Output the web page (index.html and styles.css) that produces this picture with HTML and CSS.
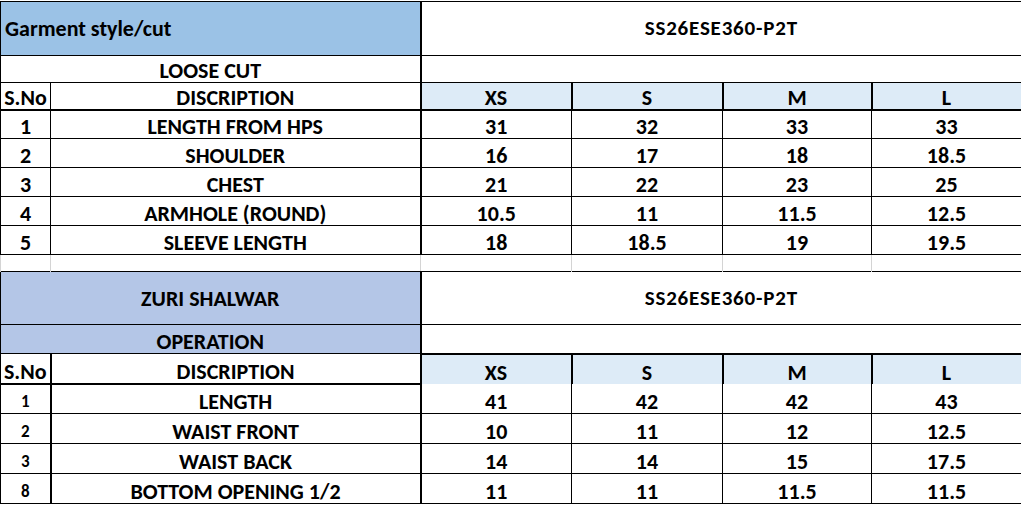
FILE: index.html
```html
<!DOCTYPE html>
<html>
<head>
<meta charset="utf-8">
<link rel="stylesheet" href="styles.css">
</head>
<body>
<table class="sheet">
  <colgroup>
    <col class="c-no"><col class="c-desc"><col class="c-xs"><col class="c-s"><col class="c-m"><col class="c-l">
  </colgroup>
  <tbody>
    <tr class="r-title">
      <td colspan="2" class="title edge">Garment style/cut</td>
      <td colspan="4" class="code">SS26ESE360-P2T</td>
    </tr>
    <tr class="r-27">
      <td colspan="2" class="edge">LOOSE CUT</td>
      <td colspan="4"></td>
    </tr>
    <tr class="r-27 head">
      <td>S.No</td><td class="edge">DISCRIPTION</td>
      <td class="sz">XS</td><td class="sz">S</td><td class="sz">M</td><td class="sz">L</td>
    </tr>
    <tr class="r-29"><td>1</td><td class="edge">LENGTH FROM HPS</td><td>31</td><td>32</td><td>33</td><td>33</td></tr>
    <tr class="r-29"><td>2</td><td class="edge">SHOULDER</td><td>16</td><td>17</td><td>18</td><td>18.5</td></tr>
    <tr class="r-29"><td>3</td><td class="edge">CHEST</td><td>21</td><td>22</td><td>23</td><td>25</td></tr>
    <tr class="r-29"><td>4</td><td class="edge">ARMHOLE (ROUND)</td><td>10.5</td><td>11</td><td>11.5</td><td>12.5</td></tr>
    <tr class="r-29"><td>5</td><td class="edge">SLEEVE LENGTH</td><td>18</td><td>18.5</td><td>19</td><td>19.5</td></tr>
    <tr class="r-gap"><td></td><td></td><td></td><td></td><td></td><td></td></tr>
    <tr class="r-title2">
      <td colspan="2" class="band edge">ZURI SHALWAR</td>
      <td colspan="4" class="code">SS26ESE360-P2T</td>
    </tr>
    <tr class="r-29">
      <td colspan="2" class="band edge">OPERATION</td>
      <td colspan="4"></td>
    </tr>
    <tr class="r-30 head2">
      <td class="no hd">S.No</td><td class="edge">DISCRIPTION</td>
      <td class="sz">XS</td><td class="sz">S</td><td class="sz">M</td><td class="sz">L</td>
    </tr>
    <tr class="r-30 first"><td class="no">1</td><td class="edge">LENGTH</td><td>41</td><td>42</td><td>42</td><td>43</td></tr>
    <tr class="r-30"><td class="no">2</td><td class="edge">WAIST FRONT</td><td>10</td><td>11</td><td>12</td><td>12.5</td></tr>
    <tr class="r-30"><td class="no">3</td><td class="edge">WAIST BACK</td><td>14</td><td>14</td><td>15</td><td>17.5</td></tr>
    <tr class="r-30"><td class="no">8</td><td class="edge">BOTTOM OPENING 1/2</td><td>11</td><td>11</td><td>11.5</td><td>11.5</td></tr>
  </tbody>
</table>
</body>
</html>
```

FILE: styles.css
```css
html, body {
  margin: 0;
  padding: 0;
  background: #ffffff;
}

body {
  padding-top: 1px;
  overflow: hidden;
}

.sheet {
  border-collapse: collapse;
  table-layout: fixed;
  width: 1021px;
  font-family: Carlito, "Liberation Sans Narrow", "Open Sans", sans-serif;
  font-weight: bold;
  font-size: 22px;
  color: #000;
}

.c-no { width: 50px; }
.c-desc { width: 370px; }
.c-xs { width: 151px; }
.c-s { width: 151px; }
.c-m { width: 149px; }
.c-l { width: 150px; }

.sheet td {
  border: 1px solid #000;
  padding: 0 2px 0;
  text-align: center;
  vertical-align: bottom;
  line-height: 23px;
  white-space: nowrap;
}

.sheet td.edge {
  border-right: 2px solid #000;
}

.r-title { height: 54px; }
.r-title2 { height: 53px; }
.r-27 { height: 27px; }
.r-29 { height: 29px; }
.r-30 { height: 30px; }
.r-gap { height: 17px; }

.sheet td.title {
  background: #9bc2e6;
  text-align: left;
  vertical-align: middle;
  padding-left: 4px;
}

.sheet td.code {
  vertical-align: middle;
  font-size: 21px;
  letter-spacing: 0.8px;
}

.sheet td.band {
  background: #b4c6e7;
}

.r-title2 .band {
  vertical-align: middle;
}

.head td {
  border-bottom: 2px solid #000;
}

.sheet td.sz {
  background: #ddebf7;
  border-left: 2px solid #000;
  border-right: 2px solid #000;
}

.head2 td.sz {
  border-top: 2px solid #000;
  border-bottom: none;
}

.head2 td.no,
.head2 td.edge {
  border-bottom: 2px solid #000;
}

.first td:nth-child(n+3) {
  border-top: none;
}

.sheet td.no {
  border-right: 2px solid #000;
  font-size: 17px;
}

.sheet td.no.hd {
  font-size: 22px;
}

.r-gap td {
  border-top: none;
  border-bottom: none;
  border-left: 1px solid #d4d4d4;
  border-right: 1px solid #d4d4d4;
}
```
